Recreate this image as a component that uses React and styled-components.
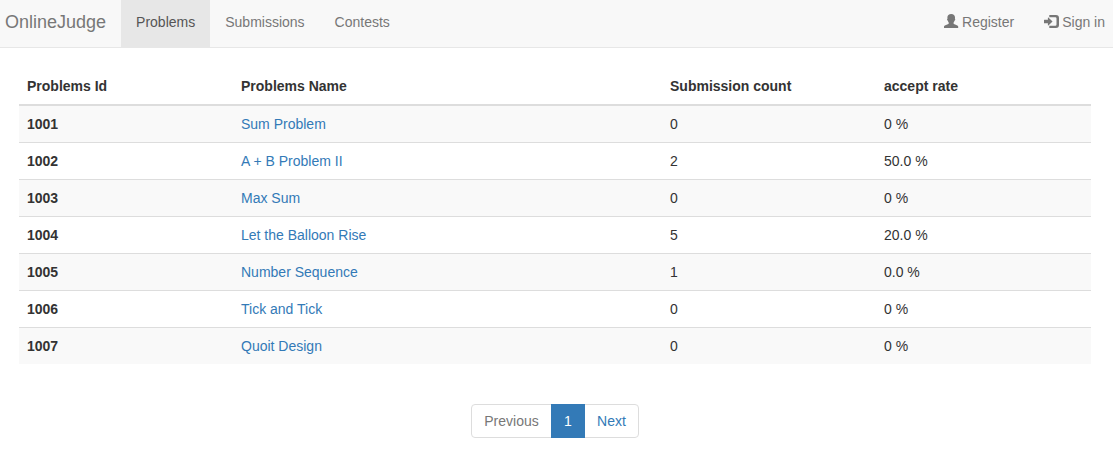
import React from "react";
import styled, { createGlobalStyle } from "styled-components";

const GlobalStyle = createGlobalStyle`
  * { box-sizing: border-box; }
  body {
    margin: 0;
    font-family: "Liberation Sans", Arial, sans-serif;
    font-size: 14px;
    line-height: 20px;
    color: #333;
    background: #fff;
  }
  a { color: #337ab7; text-decoration: none; }
`;

const Navbar = styled.nav`
  display: flex;
  height: 48px;
  background: #f8f8f8;
  border-bottom: 1px solid #e7e7e7;
`;

const Brand = styled.a`
  padding: 12px 15px 15px 5px;
  font-size: 18px;
  && { color: #777; }
`;

const NavList = styled.ul`
  display: flex;
  margin: 0;
  padding: 0;
  list-style: none;
  margin-left: ${(p) => (p.$right ? "auto" : "0")};
  margin-right: ${(p) => (p.$right ? "-7px" : "0")};
`;

const NavLink = styled.a`
  display: block;
  height: 47px;
  padding: 12px 15px 15px;
  background: ${(p) => (p.$active ? "#e7e7e7" : "transparent")};
  && { color: ${(p) => (p.$active ? "#555" : "#777")}; }
`;

const Icon = styled.svg`
  width: 15px;
  height: 14px;
  margin-right: 3px;
  vertical-align: -1px;
  fill: currentColor;
`;

const Main = styled.main`
  padding: 20px 22px 0 19px;
`;

const Table = styled.table`
  width: 100%;
  table-layout: fixed;
  border-collapse: collapse;
  border-spacing: 0;
`;

const HeadCell = styled.th`
  width: ${(p) => p.$width};
  padding: 8px;
  text-align: left;
  font-weight: 700;
  border-bottom: 2px solid #ddd;
`;

const Row = styled.tr`
  background: ${(p) => (p.$striped ? "#f9f9f9" : "#fff")};
`;

const Cell = styled.td`
  padding: 8px;
  text-align: left;
  font-weight: ${(p) => (p.$bold ? 700 : 400)};
  border-top: 1px solid #ddd;
`;

const Pagination = styled.ul`
  display: flex;
  justify-content: center;
  margin: 40px 0 0;
  padding: 0;
  list-style: none;
`;

const PageLink = styled.a`
  display: block;
  width: ${(p) => p.$width};
  padding: 6px 0;
  text-align: center;
  margin-left: ${(p) => (p.$first ? "0" : "-1px")};
  position: relative;
  z-index: ${(p) => (p.$active ? 1 : 0)};
  border: 1px solid ${(p) => (p.$active ? "#337ab7" : "#ddd")};
  background: ${(p) => (p.$active ? "#337ab7" : "#fff")};
  border-radius: ${(p) => p.$radius || "0"};
  && { color: ${(p) => (p.$active ? "#fff" : p.$disabled ? "#777" : "#337ab7")}; }
`;

const UserIcon = () => (
  <Icon viewBox="0 0 15 14" aria-hidden="true">
    <path d="M7.200 0C9.600 0 11 1.500 11 3.500c0 .5 0 .9-.1 1.300.5.1.4.7.2 1.300-.2.500-.4.700-.6.700-.2.800-.5 1.300-.9 1.800v.8c0 .4.400.6.900.8l2.300 1c.9.4 1.400.9 1.400 1.600v.9c0 .2-.1.300-.3.300H.3c-.2 0-.3-.1-.3-.3v-.9c0-.7.500-1.200 1.400-1.600l2.400-1c.6-.2.900-.4.900-.8v-.8c-.4-.5-.7-1-.8-1.800-.3 0-.5-.2-.7-.7-.2-.6-.2-1.200.3-1.300-.1-.4-.1-.8-.1-1.300C3.400 1.500 4.800 0 7.200 0z" />
  </Icon>
);

const LogInIcon = () => (
  <Icon viewBox="0 0 15 14" aria-hidden="true">
    <path d="M5.300 1H12a3 3 0 0 1 3 3v7a3 3 0 0 1-3 3H5.300v-2.200h6a1.200 1.200 0 0 0 1.200-1.200V4.400a1.200 1.200 0 0 0-1.200-1.200h-6z" />
    <path d="M3.900 3.800a.3.300 0 0 1 .5-.2L8.300 7.200a.4.4 0 0 1 0 .6l-3.900 3.600a.3.300 0 0 1-.5-.2V9.300H.4A.4.4 0 0 1 0 8.900V6.100a.4.4 0 0 1 .4-.4h3.500z" />
  </Icon>
);

const navItems = ["Problems", "Submissions", "Contests"];

const problems = [
  ["1001", "Sum Problem", "0", "0 %"],
  ["1002", "A + B Problem II", "2", "50.0 %"],
  ["1003", "Max Sum", "0", "0 %"],
  ["1004", "Let the Balloon Rise", "5", "20.0 %"],
  ["1005", "Number Sequence", "1", "0.0 %"],
  ["1006", "Tick and Tick", "0", "0 %"],
  ["1007", "Quoit Design", "0", "0 %"],
];

export default function App() {
  return (
    <>
      <GlobalStyle />
      <Navbar>
        <Brand href="#">OnlineJudge</Brand>
        <NavList>
          {navItems.map((label, i) => (
            <li key={label}><NavLink href="#" $active={i === 0}>{label}</NavLink></li>
          ))}
        </NavList>
        <NavList $right>
          <li><NavLink href="#"><UserIcon />Register</NavLink></li>
          <li><NavLink href="#"><LogInIcon />Sign in</NavLink></li>
        </NavList>
      </Navbar>
      <Main>
        <Table>
          <thead>
            <tr>
              <HeadCell $width="214px">Problems Id</HeadCell>
              <HeadCell $width="429px">Problems Name</HeadCell>
              <HeadCell $width="214px">Submission count</HeadCell>
              <HeadCell>accept rate</HeadCell>
            </tr>
          </thead>
          <tbody>
            {problems.map(([id, name, count, rate], i) => (
              <Row key={id} $striped={i % 2 === 0}>
                <Cell as="th" $bold>{id}</Cell>
                <Cell><a href="#">{name}</a></Cell>
                <Cell>{count}</Cell>
                <Cell>{rate}</Cell>
              </Row>
            ))}
          </tbody>
        </Table>
        <Pagination>
          <li><PageLink href="#" $first $disabled $width="81px" $radius="4px 0 0 4px">Previous</PageLink></li>
          <li><PageLink href="#" $active $width="34px">1</PageLink></li>
          <li><PageLink href="#" $width="55px" $radius="0 4px 4px 0">Next</PageLink></li>
        </Pagination>
      </Main>
    </>
  );
}
